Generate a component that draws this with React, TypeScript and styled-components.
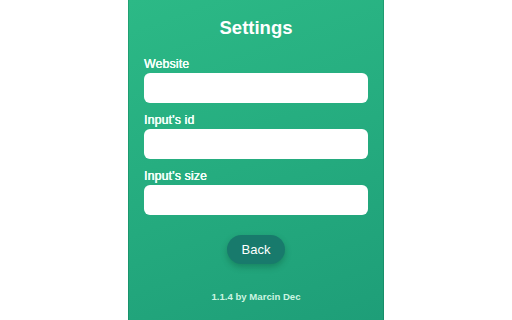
import React from "react";
import styled, { createGlobalStyle } from "styled-components";

const Global = createGlobalStyle`
  html, body { margin: 0; padding: 0; background: #ffffff; }
  body { font-family: "Liberation Sans", Arial, sans-serif; }
  * { box-sizing: border-box; }
`;

const Page = styled.div`
  display: flex;
  justify-content: center;
  width: 512px;
  height: 320px;
  overflow: hidden;
`;

const Panel = styled.div`
  width: 256px;
  height: 320px;
  background: linear-gradient(160deg, #2cb986 0%, #25ac7f 50%, #1e9e78 100%);
  box-shadow: inset 1px 0 0 rgba(0, 90, 60, 0.25), inset -1px 0 0 rgba(0, 90, 60, 0.25);
  padding: 16px 16px 0;
  display: flex;
  flex-direction: column;
  color: #ffffff;
`;

const Title = styled.h1`
  margin: 0 0 17px;
  font-size: 18.5px;
  line-height: 24px;
  font-weight: 700;
  text-align: center;
  color: #ffffff;
`;

const Field = styled.div`
  display: flex;
  flex-direction: column;
  margin-bottom: 10px;
`;

const Label = styled.label`
  font-size: 12.2px;
  line-height: 15px;
  font-weight: 400;
  letter-spacing: 0.2px;
  color: #f4fff9;
  text-shadow: 0.35px 0 0 #f4fff9, 0 0 0.5px rgba(255, 255, 255, 0.8);
  margin-bottom: 1px;
`;

const Input = styled.input`
  width: 224px;
  height: 30px;
  border: none;
  border-radius: 6px;
  background: #ffffff;
  outline: none;
  padding: 0 10px;
  font-family: inherit;
`;

const ButtonRow = styled.div`
  display: flex;
  justify-content: center;
  margin-top: 10px;
`;

const BackButton = styled.button`
  width: 58px;
  height: 29px;
  border: none;
  border-radius: 15px;
  background: #187a6c;
  color: #ffffff;
  font-family: "Liberation Sans", Arial, sans-serif;
  font-size: 13px;
  cursor: pointer;
  box-shadow: 0 3px 6px rgba(0, 60, 40, 0.3);
`;

const Footer = styled.div`
  margin-top: 27px;
  text-align: center;
  font-size: 9.6px;
  font-weight: 700;
  color: #cdf5e2;
`;

export default function App() {
  return (
    <>
      <Global />
      <Page>
        <Panel>
          <Title>Settings</Title>
          <Field>
            <Label>Website</Label>
            <Input type="text" />
          </Field>
          <Field>
            <Label>Input's id</Label>
            <Input type="text" />
          </Field>
          <Field>
            <Label>Input's size</Label>
            <Input type="text" />
          </Field>
          <ButtonRow>
            <BackButton>Back</BackButton>
          </ButtonRow>
          <Footer>1.1.4 by Marcin Dec</Footer>
        </Panel>
      </Page>
    </>
  );
}
